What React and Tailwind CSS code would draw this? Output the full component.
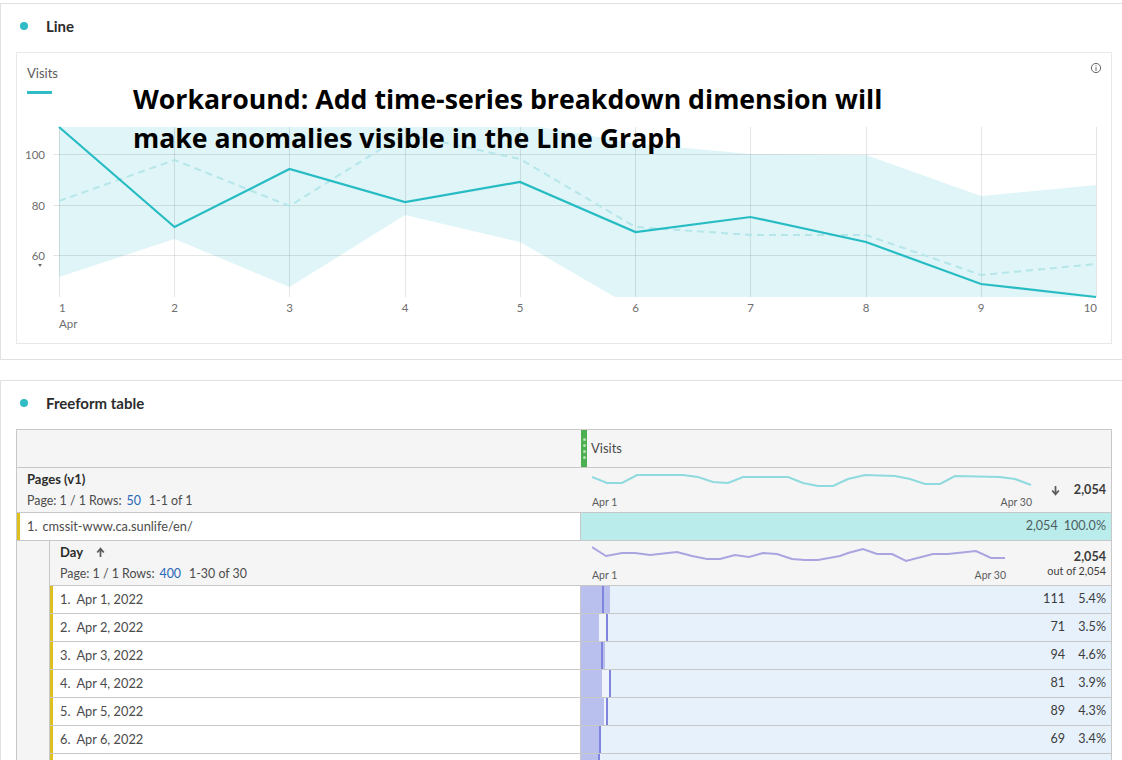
import React from 'react';

const XS = [59, 174.5, 289.5, 405, 520, 635.5, 750.5, 866, 981, 1096];
const ACTUAL = [127, 227, 169, 202, 182, 232, 217, 242, 284, 297];
const EXPECTED = [201, 160, 206, 134, 159, 227, 235, 235, 275, 264];
const BAND = '59,127 540,127 635.5,143.5 750.5,154 866,155 981,196 1096,185 1096,297 615,297 520,242 405,215 289.5,287 174.5,239 59,277';

const toPoints = (ys) => XS.map((x, i) => `${x},${ys[i]}`).join(' ');

const TEAL_SPARK = '592,477 607,483 622,483 637,475 683,475 698,477 713,482 728,483 743,477 788,477 803,483 818,486 833,486 848,479 865,475 895,476 910,479 925,484 940,484 955,476 1000,477 1015,479 1031,485';
const PURPLE_SPARK = '592,547 606,556 622,553 635,553 650,555 677,552 692,556 707,559 720,559 735,555 749,557 763,553 777,554 792,559 805,560 818,560 840,556 848,553 863,549 877,554 892,554 906,561 933,554 948,554 976,551 991,558 1005,558';

const DAYS = [
  { label: 'Apr 1, 2022', visits: '111', pct: '5.4%', bar: 29, gap: 0, tick: 21 },
  { label: 'Apr 2, 2022', visits: '71', pct: '3.5%', bar: 18, gap: 7, tick: 25 },
  { label: 'Apr 3, 2022', visits: '94', pct: '4.6%', bar: 24, gap: 0, tick: 20 },
  { label: 'Apr 4, 2022', visits: '81', pct: '3.9%', bar: 21, gap: 7, tick: 28 },
  { label: 'Apr 5, 2022', visits: '89', pct: '4.3%', bar: 23, gap: 2, tick: 25 },
  { label: 'Apr 6, 2022', visits: '69', pct: '3.4%', bar: 18, gap: 0, tick: 18 },
  // only the top of this row is in the picture, its text is below the fold
  { bar: 17, gap: 0, tick: 17 },
];

const PanelTitle = ({ children }) => (
  <div className="flex items-center h-[48px] pl-[19px] pb-[4px]">
    <span className="w-2 h-2 rounded-full bg-[#2fbcc4]"></span>
    <span className="ml-[18px] text-[15px] font-bold text-[#2c2c2c]">{children}</span>
  </div>
);

const LineChart = () => (
  <svg className="block w-[1094px] h-[242px]" viewBox="17 100 1094 242">
    <polygon points={BAND} fill="#dff5f7" />
    {[154, 205, 255].map((y) => (
      <line key={y} x1="53" x2="1096" y1={y + 0.5} y2={y + 0.5} stroke="#000" strokeOpacity="0.1" strokeWidth="1" />
    ))}
    {XS.map((x) => (
      <line key={x} x1={Math.floor(x) + 0.5} x2={Math.floor(x) + 0.5} y1="127" y2="297" stroke="#000" strokeOpacity="0.1" strokeWidth="1" />
    ))}
    <polyline points={toPoints(EXPECTED)} fill="none" stroke="#b5e6ea" strokeWidth="2" strokeDasharray="7 5" />
    <polyline points={toPoints(ACTUAL)} fill="none" stroke="#27bcc4" strokeWidth="2.2" />
    {[['100', 159], ['80', 210], ['60', 260]].map(([label, y]) => (
      <text key={label} x="45" y={y} textAnchor="end" fontSize="11.5" fill="#6e6e6e">{label}</text>
    ))}
    <polygon points="38,264 42,264 40,267" fill="#6e6e6e" />
    {XS.map((x, i) => (
      <text
        key={x}
        x={i === 9 ? 1097 : i === 0 ? 59 : x}
        y="312"
        textAnchor={i === 9 ? 'end' : i === 0 ? 'start' : 'middle'}
        fontSize="11.5"
        fill="#6e6e6e"
      >
        {i + 1}
      </text>
    ))}
    <text x="59" y="328" fontSize="11.5" fill="#6e6e6e">Apr</text>
  </svg>
);

const Spark = ({ points, color, viewBox, className }) => (
  <svg className={className} viewBox={viewBox}>
    <polyline points={points} fill="none" stroke={color} strokeWidth="2" />
  </svg>
);

const Pager = ({ rows, range }) => (
  <div className="flex items-center text-[12.4px] text-[#4b4b4b] mt-[6px] leading-[16px]">
    <span>Page: 1 / 1 Rows:</span>
    <span className="ml-[5px] text-[#2a66b8]">{rows}</span>
    <span className="ml-[8px]">{range}</span>
  </div>
);

const DayRow = ({ day, index }) => (
  <div className="flex h-[28px] border-b border-[#c8c8c8] bg-white">
    <div className="w-[530px] flex items-center border-l-[3px] border-[#dcc01f] pl-[7px] text-[12.8px] text-[#4b4b4b]">
      {day.label && <span>{index + 1}.</span>}
      {day.label && <span className="ml-[6px]">{day.label}</span>}
    </div>
    <div className="relative flex-1 flex items-center justify-end bg-[#e6f1fc] border-l border-[#c8c8c8] pr-[5px] text-[12.6px] text-[#3c3c3c]">
      <div className="absolute left-0 top-0 bottom-0 bg-[#b9c0ee]" style={{ width: day.bar }}></div>
      <div className="absolute top-0 bottom-0 bg-[#f0f5fc]" style={{ left: day.bar, width: day.gap }}></div>
      <div className="absolute top-0 bottom-0 w-[2px] bg-[#7f84dc]" style={{ left: day.tick }}></div>
      <span>{day.visits}</span>
      <span className="w-[41px] text-right">{day.pct}</span>
    </div>
  </div>
);

export default function App() {
  return (
    <div className="relative w-[1122px] h-[760px] overflow-hidden bg-white font-['Lato',sans-serif]">
      <div className="mt-[3px] h-[357px] border-t border-b border-l border-[#e1e1e1]">
        <PanelTitle>Line</PanelTitle>
        <div className="ml-[15px] w-[1096px] h-[292px] border border-[#e8e8e8]">
          <div className="relative h-[47px] pl-[10px] pt-[12px]">
            <div className="text-[13px] leading-[16px] text-[#5c5c5c]">Visits</div>
            <div className="mt-[10px] w-[25px] h-[3px] bg-[#2fbcc4]"></div>
            <svg className="absolute right-[9px] top-[9px] w-[12px] h-[12px]" viewBox="0 0 12 12">
              <circle cx="6" cy="6" r="4.6" fill="none" stroke="#666" strokeWidth="1" />
              <line x1="6" x2="6" y1="5.2" y2="8.8" stroke="#666" strokeWidth="1" />
              <line x1="6" x2="6" y1="3.2" y2="4.2" stroke="#666" strokeWidth="1" />
            </svg>
          </div>
          <LineChart />
        </div>
      </div>

      <div className="mt-[20px] border-t border-l border-[#e1e1e1]">
        <PanelTitle>Freeform table</PanelTitle>
        <div className="ml-[15px] w-[1096px] border-t border-l border-r border-[#c8c8c8]">
          <div className="flex h-[38px] bg-[#f5f5f5] border-b border-[#c8c8c8]">
            <div className="w-[564px]"></div>
            <div className="w-[6px] bg-[#4caf50] flex flex-col items-center justify-center gap-[3px]">
              {[0, 1, 2, 3].map((n) => (
                <span key={n} className="w-[3px] h-[3px] rounded-full bg-[#b5e0b5]"></span>
              ))}
            </div>
            <div className="ml-[4px] flex items-center text-[13px] text-[#4b4b4b]">Visits</div>
          </div>

          <div className="flex h-[45px] bg-[#f5f5f5] border-b border-[#c8c8c8]">
            <div className="w-[564px] pl-[10px] pt-[3px]">
              <div className="text-[13px] font-bold leading-[16px] text-[#2c2c2c]">Pages (v1)</div>
              <Pager rows="50" range="1-1 of 1" />
            </div>
            <div className="w-[451px] pl-[11px]">
              <Spark className="block w-[440px] h-[24px]" points={TEAL_SPARK} color="#8fdade" viewBox="592 468 440 24" />
              <div className="flex justify-between text-[10.5px] leading-[14px] text-[#5c5c5c] mt-[3px]">
                <span>Apr 1</span>
                <span>Apr 30</span>
              </div>
            </div>
            <div className="flex-1 flex items-center justify-end pr-[5px] text-[12.6px] text-[#3c3c3c]">
              <svg className="w-[11px] h-[11px] mr-[13px]" viewBox="0 0 10 10">
                <path d="M5 1v7M2 5l3 3.5L8 5" fill="none" stroke="#5c5c5c" strokeWidth="1.6" />
              </svg>
              <span className="font-bold">2,054</span>
            </div>
          </div>

          <div className="flex h-[28px] border-b border-[#c8c8c8] bg-white">
            <div className="w-[563px] flex items-center border-l-[3px] border-[#dcc01f] pl-[7px] text-[12.8px] text-[#4b4b4b]">
              <span>1.</span>
              <span className="ml-[5px]">cmssit-www.ca.sunlife/en/</span>
            </div>
            <div className="flex-1 flex items-center justify-end bg-[#bbecec] border-l border-[#c8c8c8] pr-[5px] text-[12.6px] text-[#4b5f60]">
              <span>2,054</span>
              <span className="ml-[6px]">100.0%</span>
            </div>
          </div>

          <div className="flex">
            <div className="w-[33px] bg-[#f5f5f5] border-r border-[#c8c8c8]"></div>
            <div className="flex-1">
              <div className="flex h-[45px] bg-[#f5f5f5] border-b border-[#c8c8c8]">
                <div className="w-[531px] pl-[10px] pt-[3px]">
                  <div className="flex items-center text-[13px] font-bold leading-[16px] text-[#2c2c2c]">
                    Day
                    <svg className="ml-[12px] w-[11px] h-[11px]" viewBox="0 0 10 10">
                      <path d="M5 9V2M2 5l3-3.5L8 5" fill="none" stroke="#5c5c5c" strokeWidth="1.6" />
                    </svg>
                  </div>
                  <Pager rows="400" range="1-30 of 30" />
                </div>
                <div className="w-[425px] pl-[11px]">
                  <Spark className="block w-[414px] h-[24px]" points={PURPLE_SPARK} color="#aaa5e0" viewBox="592 541 414 24" />
                  <div className="flex justify-between text-[10.5px] leading-[14px] text-[#5c5c5c] mt-[3px]">
                    <span>Apr 1</span>
                    <span>Apr 30</span>
                  </div>
                </div>
                <div className="flex-1 flex flex-col items-end justify-center pr-[5px] text-[#3c3c3c]">
                  <span className="text-[12.6px] font-bold leading-[15px]">2,054</span>
                  <span className="text-[10.8px] leading-[13px] whitespace-nowrap">out of 2,054</span>
                </div>
              </div>
              {DAYS.map((day, index) => (
                <DayRow key={index} day={day} index={index} />
              ))}
            </div>
          </div>
        </div>
      </div>

      <div className="absolute left-[133px] top-[79px] w-[800px] font-['Open_Sans',sans-serif] text-[26.7px] font-bold leading-[39px] text-black">
        Workaround: Add time-series breakdown dimension will make anomalies visible in the Line Graph
      </div>
    </div>
  );
}
